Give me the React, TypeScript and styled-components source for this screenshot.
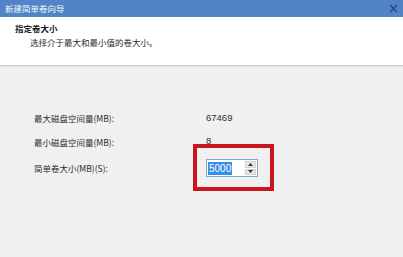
import styled, { createGlobalStyle } from "styled-components";

const Global = createGlobalStyle`
  html, body {
    margin: 0;
    padding: 0;
    background: #f0f0f0;
  }
  body {
    width: 403px;
    height: 257px;
    overflow: hidden;
    font-family: "Noto Sans CJK SC", "Noto Sans", sans-serif;
  }
`;

const Window = styled.div`
  width: 403px;
  height: 257px;
  display: flex;
  flex-direction: column;
  background: #f0f0f0;
`;

const TitleBar = styled.div`
  height: 17px;
  flex: none;
  display: flex;
  align-items: center;
  justify-content: space-between;
  padding: 0 5px 0 5px;
  background: #5084c7;
  color: #f4f7fc;
  font-size: 8.5px;
  line-height: 17px;
`;

const CloseButton = styled.span`
  display: flex;
  align-items: center;
  margin-top: -1px;
  color: #24406e;
`;

const Header = styled.div`
  height: 49px;
  flex: none;
  box-sizing: border-box;
  padding: 5px 0 0 15px;
  background: #ffffff;
  border-bottom: 1px solid #cfcfcf;
  box-shadow: 0 1px 0 #e2e2e2;
  color: #1a1a1a;
`;

const HeaderTitle = styled.div`
  font-size: 8.5px;
  font-weight: 700;
  line-height: 12px;
`;

const HeaderText = styled.div`
  margin-top: 2px;
  padding-left: 15px;
  font-size: 8.5px;
  line-height: 12px;
  color: #2a2a2a;
`;

const Body = styled.div`
  flex: 1;
  padding: 40px 0 0 34px;
`;

const Form = styled.div`
  display: grid;
  grid-template-columns: 172px auto;
  grid-template-rows: 24px 24px 28px;
  align-items: center;
  font-size: 8.5px;
  color: #2e2e2e;
`;

const Label = styled.div`
  line-height: 12px;
`;

const Value = styled.div<{ $up?: number }>`
  font-family: "Liberation Sans", sans-serif;
  font-size: 9.5px;
  line-height: 12px;
  margin-top: ${(p) => -(p.$up ?? 0)}px;
`;

const SpinBox = styled.div`
  position: relative;
  display: flex;
  width: 52px;
  height: 18px;
  box-sizing: border-box;
  border: 1px solid #8aa4c4;
  background: #ffffff;

  &::after {
    content: "";
    position: absolute;
    top: -16px;
    left: -14px;
    right: -17px;
    bottom: -15px;
    border: 4px solid #c8161c;
    pointer-events: none;
  }
`;

const Field = styled.div`
  flex: 1;
  display: flex;
  align-items: center;
  padding-left: 1px;
`;

const Selected = styled.span`
  background: #3a8ee6;
  color: #ffffff;
  font-family: "Liberation Sans", sans-serif;
  font-size: 10px;
  line-height: 13px;
  padding: 0 1px;
`;

const Spinner = styled.div`
  width: 11px;
  display: flex;
  flex-direction: column;
  gap: 1px;
  padding: 1px;
  background: #ffffff;
`;

const SpinButton = styled.div`
  flex: 1;
  display: flex;
  align-items: center;
  justify-content: center;
  background: #e6e6e6;
  border: 1px solid #d2d2d2;
`;

function Arrow({ down }: { down?: boolean }) {
  return (
    <svg width="5" height="3" viewBox="0 0 5 3">
      <path d={down ? "M0 0h5L2.5 3z" : "M0 3h5L2.5 0z"} fill="#333" />
    </svg>
  );
}

export default function App() {
  return (
    <Window>
      <Global />
      <TitleBar>
        新建简单卷向导
        <CloseButton>
          <svg width="9" height="9" viewBox="0 0 9 9">
            <path d="M1 1l7 7M8 1L1 8" stroke="currentColor" strokeWidth="1.1" />
          </svg>
        </CloseButton>
      </TitleBar>
      <Header>
        <HeaderTitle>指定卷大小</HeaderTitle>
        <HeaderText>选择介于最大和最小值的卷大小。</HeaderText>
      </Header>
      <Body>
        <Form>
          <Label>最大磁盘空间量(MB):</Label>
          <Value>67469</Value>
          <Label>最小磁盘空间量(MB):</Label>
          <Value $up={2}>8</Value>
          <Label>简单卷大小(MB)(S):</Label>
          <SpinBox>
            <Field>
              <Selected>5000</Selected>
            </Field>
            <Spinner>
              <SpinButton>
                <Arrow />
              </SpinButton>
              <SpinButton>
                <Arrow down />
              </SpinButton>
            </Spinner>
          </SpinBox>
        </Form>
      </Body>
    </Window>
  );
}
